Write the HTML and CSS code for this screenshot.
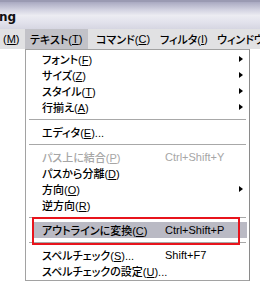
FILE: index.html
```html
<!DOCTYPE html>
<html lang="ja">
<head>
<meta charset="utf-8">
<link rel="stylesheet" href="styles.css">
</head>
<body>
<div class="titlebar"><span class="title">ng</span></div>
<div class="menubar">
  <span class="mb mb-first">(<u>M</u>)</span>
  <span class="mb mb-active">テキスト(<u>T</u>)</span>
  <span class="mb mb-cmd">コマンド(<u>C</u>)</span>
  <span class="mb mb-filter">フィルタ(<u>I</u>)</span>
  <span class="mb mb-win">ウィンドウ</span>
</div>
<div class="menu">
  <div class="item"><span class="label">フォント(<u>F</u>)</span><span class="key"></span><span class="arrow"></span></div>
  <div class="item"><span class="label">サイズ(<u>Z</u>)</span><span class="key"></span><span class="arrow"></span></div>
  <div class="item"><span class="label">スタイル(<u>T</u>)</span><span class="key"></span><span class="arrow"></span></div>
  <div class="item"><span class="label">行揃え(<u>A</u>)</span><span class="key"></span><span class="arrow"></span></div>
  <div class="sep"></div>
  <div class="item"><span class="label">エディタ(<u>E</u>)...</span><span class="key"></span></div>
  <div class="sep"></div>
  <div class="item disabled"><span class="label">パス上に結合(<u>P</u>)</span><span class="key">Ctrl+Shift+Y</span></div>
  <div class="item"><span class="label">パスから分離(<u>D</u>)</span><span class="key"></span></div>
  <div class="item"><span class="label">方向(<u>O</u>)</span><span class="key"></span><span class="arrow"></span></div>
  <div class="item"><span class="label">逆方向(<u>R</u>)</span><span class="key"></span></div>
  <div class="sep"></div>
  <div class="item hl"><span class="label">アウトラインに変換(<u>C</u>)</span><span class="key">Ctrl+Shift+P</span><span class="mark"></span></div>
  <div class="sep"></div>
  <div class="item"><span class="label">スペルチェック(<u>S</u>)...</span><span class="key">Shift+F7</span></div>
  <div class="item"><span class="label">スペルチェックの設定(<u>U</u>)...</span><span class="key"></span></div>
</div>
</body>
</html>
```
FILE: styles.css
```css
html, body {
  margin: 0;
  padding: 0;
}
body {
  width: 260px;
  height: 283px;
  overflow: hidden;
  background: #ffffff;
  font-family: "Liberation Sans", "Noto Sans CJK JP", sans-serif;
  font-size: 11px;
  font-weight: 500;
  font-feature-settings: "palt";
  color: #000;
}
u {
  text-decoration: underline;
  text-underline-offset: 1px;
}
.titlebar {
  height: 29px;
  box-sizing: border-box;
  border-top: 2px solid #9a9ab2;
  background: linear-gradient(to bottom, #a9a9c1 0%, #d4d4e2 30%, #ececf2 50%, #e2e2ec 75%, #d6d6e2 100%);
  display: flex;
  align-items: center;
}
.title {
  font-family: "DejaVu Sans", sans-serif;
  font-weight: bold;
  font-size: 12px;
  margin-left: -1px;
  margin-top: 2px;
  color: #111;
}
.menubar {
  height: 20px;
  background: #e1e1e3;
  display: flex;
  align-items: stretch;
  white-space: nowrap;
  overflow: hidden;
}
.mb {
  display: flex;
  align-items: center;
  flex: none;
  box-sizing: border-box;
}
.mb-first {
  width: 25px;
  padding-left: 3px;
}
.mb-active {
  background: #c2c2c8;
  width: 63px;
  padding-left: 5px;
}
.mb-cmd {
  width: 65px;
  padding-left: 8px;
}
.mb-filter {
  width: 58px;
  padding-left: 7px;
}
.mb-win {
  padding-left: 6px;
}
.menu {
  margin-left: 25px;
  width: 225px;
  box-sizing: border-box;
  border: 1px solid #a2a2a2;
  border-right-color: #8a8a8a;
  background: #fff;
  padding: 1px;
}
.item {
  height: 16px;
  display: flex;
  align-items: center;
  padding-left: 15px;
  white-space: nowrap;
  position: relative;
}
.label {
  width: 123px;
  flex: none;
}
.key {
  flex: 1;
}
.arrow {
  width: 0;
  height: 0;
  border-top: 3.5px solid transparent;
  border-bottom: 3.5px solid transparent;
  border-left: 4px solid #000;
  margin-right: 5px;
}
.disabled {
  color: #a6a6a6;
}
.hl {
  background: #babac4;
  margin-left: 6px;
  margin-right: 1px;
  padding-left: 9px;
}
.mark {
  position: absolute;
  left: -1px;
  top: -5px;
  width: 208px;
  height: 28px;
  box-sizing: border-box;
  border: 2px solid #e8141c;
}
.sep {
  height: 9px;
  display: flex;
  align-items: center;
  padding: 0 2px;
}
.sep::before {
  content: "";
  flex: 1;
  height: 1px;
  background: #a8a8a8;
}
```
